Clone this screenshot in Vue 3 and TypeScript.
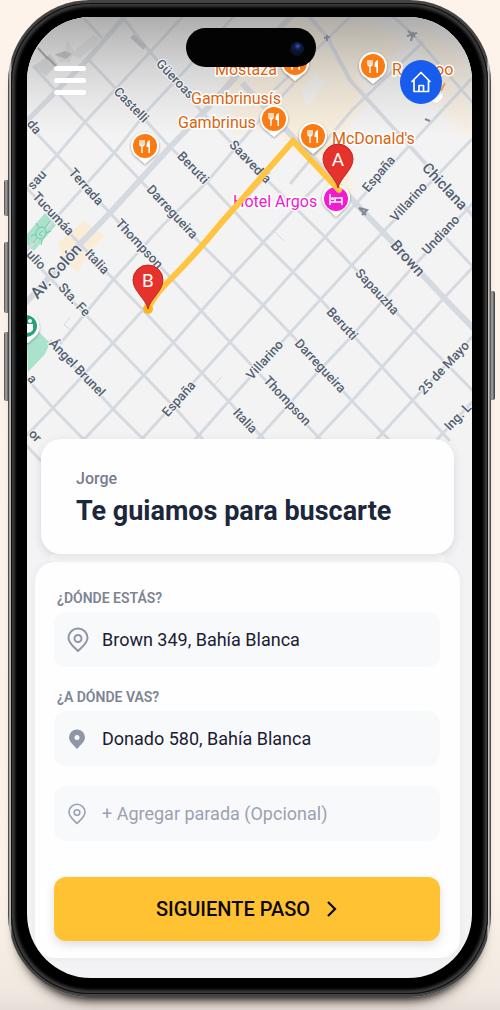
<script setup lang="ts">
import { ref } from 'vue'

interface Street { d: string; w: number }
interface StreetLabel { text: string; x: number; y: number; r: number; s: number }
interface Place { x: number; y: number }
interface PlaceLabel { text: string; x: number; y: number; kind: string }
interface Pin { t: string; x: number; y: number }

const origin = ref('Brown 349, Bahía Blanca')
const destination = ref('Donado 580, Bahía Blanca')
const stop = ref('')

const streets: Street[] = [
  { d: 'M20 309 L82 242 L110 213 L140 180 L170 147 L203 113 L233 80 L292 15', w: 6 },
  { d: 'M20 128 L88 59 L126 15', w: 5 },
  { d: 'M20 196 L57 155 L85 122 L150 52 L184 15', w: 3 },
  { d: 'M20 258 L115 152 L148 110 L190 65 L235 15', w: 3 },
  { d: 'M60 344 L113 280 L163 225 L207 182 L250 131 L294 83', w: 3 },
  { d: 'M26 436 L53 408 L113 343 L143 310 L202 245 L270 172', w: 3 },
  { d: 'M70 454 L113 409 L173 343 L233 275 L293 210 L330 172', w: 3 },
  { d: 'M130 452 L202 373 L250 320 L293 272 L350 210 L472 78', w: 3 },
  { d: 'M186 450 L228 402 L290 333 L352 265 L383 232 L472 139', w: 3 },
  { d: 'M248 450 L317 373 L350 338 L410 270 L474 202', w: 3 },
  { d: 'M306 450 L352 401 L414 331 L444 298 L474 266', w: 3 },
  { d: 'M368 449 L412 401 L474 335', w: 3 },
  { d: 'M430 447 L474 400', w: 3 },
  { d: 'M267 97 L352 15', w: 3 },
  { d: 'M290 184 L352 110 L423 42', w: 3 },
  { d: 'M81 15 L102 38', w: 3 },
  { d: 'M88 59 L148 123 L170 147 L207 182 L263 242 L321 300 L382 367 L450 441', w: 3 },
  { d: 'M33 66 L85 122 L140 180 L202 245 L263 305 L290 333 L352 401 L396 447', w: 3 },
  { d: 'M22 118 L57 155 L110 213 L170 277 L230 342 L332 452', w: 3 },
  { d: 'M20 181 L78 242 L143 310 L202 373 L276 452', w: 3 },
  { d: 'M20 247 L113 343 L177 410 L212 450', w: 3 },
  { d: 'M50 340 L113 409 L154 450', w: 3 },
  { d: 'M20 371 L53 408 L94 450', w: 3 },
  { d: 'M24 443 L44 464', w: 3 },
  { d: 'M121 15 L150 52 L203 113 L268 181 L325 237 L414 331 L474 392', w: 3 },
  { d: 'M203 113 L238 70 M203 113 L238 151', w: 2 },
  { d: 'M242 83 L293 137 L340 187 L383 232 L444 298 L474 329', w: 6 },
  { d: 'M308 15 L327 37 L350 80 L407 143 L474 217', w: 4 },
  { d: 'M391 15 L412 33 L474 104', w: 3 },
  { d: 'M446 238 L474 268', w: 3 },
  { d: 'M275 232 L284 241 M214 386 L221 377 M70 317 L64 325 L70 329', w: 1 }
]

const streetLabels: StreetLabel[] = [
  { text: 'Castelli', x: 131, y: 105, r: 46, s: 13 },
  { text: 'Güeroas', x: 175, y: 79, r: 46, s: 13 },
  { text: 'Berutti', x: 193, y: 168, r: 46, s: 13 },
  { text: 'Saavedra', x: 250, y: 162, r: 46, s: 13 },
  { text: 'Terrada', x: 86, y: 187, r: 48, s: 13 },
  { text: 'Darregueira', x: 172, y: 212, r: 47, s: 13 },
  { text: 'Thompson', x: 139, y: 244, r: 47, s: 13 },
  { text: 'Italia', x: 97, y: 262, r: 47, s: 13 },
  { text: 'Tucumáa', x: 53, y: 214, r: 47, s: 13 },
  { text: 'ulio', x: 36, y: 260, r: 47, s: 13 },
  { text: 'Av. Colón', x: 57, y: 272, r: -48, s: 16 },
  { text: 'Sta. Fe', x: 74, y: 300, r: 47, s: 13 },
  { text: 'Ángel Brunel', x: 77, y: 368, r: 46, s: 13 },
  { text: 'España', x: 179, y: 399, r: -48, s: 13 },
  { text: 'Italia', x: 245, y: 421, r: 47, s: 13 },
  { text: 'Villarino', x: 265, y: 360, r: -48, s: 13 },
  { text: 'Thompson', x: 287, y: 401, r: 47, s: 13 },
  { text: 'Darregueira', x: 320, y: 366, r: 47, s: 13 },
  { text: 'Berutti', x: 342, y: 324, r: 47, s: 13 },
  { text: 'Sapauzha', x: 377, y: 292, r: 47, s: 13 },
  { text: 'Brown', x: 407, y: 259, r: 48, s: 15 },
  { text: 'Undiano', x: 441, y: 235, r: -47, s: 13 },
  { text: 'Villarino', x: 409, y: 202, r: -48, s: 13 },
  { text: 'España', x: 379, y: 174, r: -50, s: 13 },
  { text: 'Chiclana', x: 444, y: 187, r: 47, s: 15 },
  { text: '25 de Mayo', x: 444, y: 368, r: -47, s: 13 },
  { text: 'Ing. L', x: 458, y: 417, r: -46, s: 13 },
  { text: 'da', x: 34, y: 127, r: 50, s: 13 },
  { text: 'sau', x: 37, y: 180, r: -48, s: 13 },
  { text: 'a', x: 32, y: 379, r: 50, s: 13 },
  { text: 'or', x: 35, y: 436, r: 46, s: 13 }
]

const restaurants: Place[] = [
  { x: 295, y: 63 },
  { x: 373, y: 66 },
  { x: 145, y: 146 },
  { x: 274, y: 119 },
  { x: 313, y: 136 }
]

const placeLabels: PlaceLabel[] = [
  { text: 'Mostaza', x: 215, y: 75, kind: 'food' },
  { text: 'Gambrinusís', x: 191, y: 104, kind: 'food' },
  { text: 'Gambrinus', x: 178, y: 128, kind: 'food' },
  { text: "McDonald's", x: 332, y: 144, kind: 'food' },
  { text: 'R', x: 392, y: 75, kind: 'food' },
  { text: 'oo', x: 435, y: 75, kind: 'food' },
  { text: 'Hotel Argos', x: 233, y: 207, kind: 'hotel' }
]

const pins: Pin[] = [
  { t: 'A', x: 338, y: 188 },
  { t: 'B', x: 148, y: 309 }
]
</script>

<template>
  <main class="page">
    <div class="phone">
      <i class="key key-action"></i>
      <i class="key key-up"></i>
      <i class="key key-down"></i>
      <i class="key key-power"></i>
      <div class="bezel">
        <div class="screen">
          <section class="map">
            <svg class="map-art" viewBox="27 17 445 446" preserveAspectRatio="xMidYMin slice" role="img" aria-label="Mapa">
              <defs>
                <linearGradient id="shade" x1="0" y1="0" x2="0" y2="1">
                  <stop offset="0" stop-color="#777" stop-opacity=".56" />
                  <stop offset=".45" stop-color="#888" stop-opacity=".27" />
                  <stop offset="1" stop-color="#aaa" stop-opacity="0" />
                </linearGradient>
                <filter id="soft" x="-20%" y="-20%" width="140%" height="140%"><feGaussianBlur stdDeviation="4" /></filter>
                <filter id="drop" x="-30%" y="-30%" width="160%" height="170%">
                  <feDropShadow dx="0" dy="1" stdDeviation="1" flood-color="#333" flood-opacity=".5" />
                </filter>
              </defs>
              <rect x="0" y="0" width="500" height="480" fill="#f4f3f4" />
              <g fill="#fbecd2" filter="url(#soft)" opacity=".65">
                <path d="M222 72 L290 20 L360 17 L405 40 L375 90 L345 130 L350 180 L352 205 L318 170 L270 125 L235 135Z" />
                <path d="M418 17 L472 60 V140 L420 90Z" opacity=".8" />
              </g>
              <g fill="#f4f3f4" opacity=".8">
                <path d="M301 90 L316 74 L327 83 L307 107Z" />
                <path d="M355 75 L378 52 L396 72 L372 100Z" />
              </g>
              <path d="M58 243 L84 221 L105 236 L89 252 L78 272 L64 261Z" fill="#fbecd6" />
              <path d="M27 234 L45 213 L56 225 L34 251 L27 245Z M27 342 L38 331 L50 343 L45 354 L28 372Z" fill="#a9e3cb" />
              <path v-for="(s, i) in streets" :key="i" :d="s.d" :stroke-width="s.w" class="street" />
              <path d="M36 223 L40 229 M50 221 L44 229 M33 243 L38 237 M51 231 L46 233 M31 236 L36 234 M42 240 L41 245" fill="none" stroke="#74c6a5" stroke-width="1" />
              <path d="M41 227 Q47 227 46 233 Q45 239 40 239 Q35 238 36 232 Q37 228 41 227Z M43 231 L39 234 L42 236" fill="#a9e3cb" stroke="#74c6a5" stroke-width="1" />
              <path d="M34 66 L50 54 L58 64 L46 76Z" fill="#cfd0d2" opacity=".7" />
              <path d="M55 54 L65 50 L67 40 L74 51 L93 35 L99 38 L97 44 L80 58 L72 56 L70 62 L60 62Z" fill="#e6e6e8" />
              <path d="M55 55 L65 51 L72 54 L66 59Z" fill="#bfc0c3" />
              <path d="M47 57 L57 67 M38 48 L48 59" fill="none" stroke="#9b9da2" stroke-width="2" />
              <path d="M132 36 L145 48" fill="none" stroke="#c3c5c9" stroke-width="5" />
              <path d="M324 38 L330 37 M327 35 V41 M407 36 L417 33 M408 31 L415 37 M411 41 L413 32 M425 119 L430 121 M359 208 L366 215 M359 208 L367 210 L362 215" fill="none" stroke="#7e8793" stroke-width="2" />
              <rect x="0" y="17" width="500" height="118" fill="url(#shade)" />
              <text
                v-for="(l, i) in streetLabels"
                :key="'s' + i"
                class="street-label"
                :font-size="l.s"
                :transform="`translate(${l.x} ${l.y}) rotate(${l.r})`"
                text-anchor="middle"
                dy="4"
              >{{ l.text }}</text>
              <text v-for="(l, i) in placeLabels" :key="'p' + i" :class="['place', l.kind]" :x="l.x" :y="l.y">{{ l.text }}</text>
              <g v-for="(p, i) in restaurants" :key="'r' + i" :transform="`translate(${p.x} ${p.y})`">
                <path d="M0 18 L-7 12 A14 14 0 1 1 7 12Z" fill="#fff" filter="url(#drop)" />
                <circle r="12" fill="#fb7a12" />
                <path d="M-5 -6 V-2 Q-5 0 -3 0 Q-1 0 -1 -2 V-6 M-3 -6 V7" fill="none" stroke="#fff" stroke-width="1.4" />
                <path d="M5 7 H3.4 V1 H1.5 Q1 -5 5 -6Z" fill="#fff" />
              </g>
              <path d="M430 101 L437 104 L443 98 V92Z" fill="#fff" stroke="#ddd" stroke-width="1" />
              <path d="M441 91 L445 83" stroke="#ef9c59" stroke-width="2" />
              <path d="M27 313 A14 14 0 0 1 36 336 L28 343 H20 V313Z" fill="#fff" filter="url(#drop)" />
              <circle cx="26" cy="326" r="11" fill="#26a17b" />
              <circle cx="30" cy="321" r="2" fill="#fff" />
              <path d="M26 324 H33 V330 Q30 334 26 332Z" fill="#fff" />
              <path d="M336 217 L329 210 A14 14 0 1 1 343 210Z" fill="#fff" filter="url(#drop)" />
              <circle cx="336" cy="199" r="12" fill="#f21bd2" />
              <path d="M330 194 V205 M330 202 H342 V205 M342 202 V198 H335 V202" fill="none" stroke="#fff" stroke-width="1.5" />
              <circle cx="332.5" cy="198.5" r="1.5" fill="#fff" />
              <path d="M148 309 Q154 296 166 284 Q196 254 222 222 L293 141 L339 190" fill="none" stroke="#ffc440" stroke-width="6" stroke-linejoin="miter" stroke-linecap="round" />
              <circle cx="148" cy="309" r="5" fill="#fdb51c" />
              <g v-for="pin in pins" :key="pin.t" :transform="`translate(${pin.x} ${pin.y})`">
                <path d="M0 0 C-2 -10 -15 -18 -15 -29 A15 15 0 0 1 15 -29 C15 -18 2 -10 0 0Z" fill="#e5322d" stroke="#bd2822" stroke-width="1" />
                <text class="pin-letter" x="0" y="-22" text-anchor="middle">{{ pin.t }}</text>
              </g>
            </svg>
            <header class="topbar">
              <button class="menu" type="button" aria-label="Menú"><i></i><i></i><i></i></button>
              <button class="home" type="button" aria-label="Inicio">
                <svg viewBox="0 0 24 24" width="24" height="24" fill="none" stroke="#fff" stroke-width="1.7" stroke-linejoin="round" stroke-linecap="round">
                  <path d="M3 11.5 L12 2.5 L21 11.500 M5 10 V21.500 H19.500 V10 M10 21 V15.500 H14.500 V21" />
                </svg>
              </button>
            </header>
            <div class="island"><i class="lens"></i></div>
          </section>

          <section class="greeting">
            <p>Jorge</p>
            <h1>Te guiamos para buscarte</h1>
          </section>
          <div class="joint"></div>

          <form class="trip" @submit.prevent>
            <label class="caption" for="origin">¿DÓNDE ESTÁS?</label>
            <div class="field">
              <span class="icon">
                <svg viewBox="0 0 24 26" width="24" height="26" fill="none" stroke="#8f96a5" stroke-width="2">
                  <path d="M12 24 C7 19 2.500 16 2.500 11 A9.500 9.500 0 0 1 21.500 11 C21.500 16 17 19 12 24Z" stroke-linejoin="round" />
                  <circle cx="12" cy="11.500" r="3.500" />
                </svg>
              </span>
              <input id="origin" v-model="origin" type="text" />
            </div>
            <label class="caption" for="destination">¿A DÓNDE VAS?</label>
            <div class="field">
              <span class="icon">
                <svg viewBox="0 0 20 22" width="20" height="22">
                  <path d="M10 21 C6 16.500 2 13.500 2 9.500 A8 8 0 0 1 18 9.500 C18 13.500 14 16.500 10 21Z" fill="#8f96a5" />
                  <circle cx="10" cy="9.500" r="2.500" fill="#f8f9fb" />
                </svg>
              </span>
              <input id="destination" v-model="destination" type="text" />
            </div>
            <div class="field">
              <span class="icon">
                <svg viewBox="0 0 20 22" width="20" height="22" fill="none" stroke="#9aa0b0" stroke-width="1.6">
                  <path d="M10 20.500 C6 16.500 2 13.500 2 9.300 A8 8 0 0 1 18 9.300 C18 13.500 14 16.500 10 20.500Z" stroke-linejoin="round" />
                  <circle cx="10" cy="9.500" r="2.800" />
                </svg>
              </span>
              <input id="stop" v-model="stop" type="text" aria-label="Parada opcional" placeholder="+ Agregar parada (Opcional)" />
            </div>
            <button class="next" type="submit">
              SIGUIENTE PASO
              <svg viewBox="0 0 12 18" width="12" height="18" fill="none" stroke="#0c0903" stroke-width="2.2"><path d="M2 2 L9 9 L2 16" /></svg>
            </button>
          </form>
        </div>
      </div>
    </div>
  </main>
</template>

<style>
body {
  margin: 0;
  background: #fdf3ea;
}
</style>

<style scoped>
* {
  box-sizing: border-box;
}
.page {
  min-height: 100vh;
  padding: 0 9px 12px 8px;
  overflow: hidden;
  font-family: Roboto, "Liberation Sans", sans-serif;
  background: linear-gradient(#fdf3ea 0, #fcf2e9 88%, #f1e9e1 98%, #e6dfd8 100%);
}
.phone {
  position: relative;
  padding: 3px;
  border-radius: 82px;
  background: linear-gradient(90deg, #222 0, #777 1px, #d5d5d5 2px, #444 4px, #444 calc(100% - 4px), #d5d5d5 calc(100% - 3px), #777 calc(100% - 1px), #222 100%);
  box-shadow: 0 10px 8px -9px #111, 0 14px 14px -10px rgba(60, 45, 35, .6);
}
.key {
  position: absolute;
  left: -4px;
  width: 5px;
  border-radius: 2px 0 0 2px;
  background: linear-gradient(90deg, #444, #aaa 40%, #333);
}
.key-action {
  top: 180px;
  height: 36px;
}
.key-up {
  top: 242px;
  height: 71px;
}
.key-down {
  top: 332px;
  height: 69px;
}
.key-power {
  right: -4px;
  left: auto;
  top: 291px;
  height: 109px;
  border-radius: 0 2px 2px 0;
}
.bezel {
  padding: 14px 16px 16px;
  border-radius: 79px;
  background: #000;
  box-shadow: inset 0 0 0 1px #111, inset 0 0 3px 4px #3c3c3c;
}
.screen {
  display: flex;
  flex-direction: column;
  overflow: hidden;
  padding-bottom: 20px;
  border-radius: 64px;
  background: #f3f3f5;
}
.map {
  position: relative;
  height: 446px;
}
.map-art {
  display: block;
  width: 100%;
  height: 100%;
}
.street {
  fill: none;
  stroke: #d5dae1;
}
.street-label {
  font-weight: 500;
  fill: #535f70;
  stroke: #f5f5f6;
  stroke-width: 2px;
  paint-order: stroke;
}
.place {
  font-size: 16px;
  stroke: #fff;
  stroke-width: 3px;
  paint-order: stroke;
}
.food {
  fill: #d8640f;
}
.hotel {
  fill: #ee19cf;
}
.pin-letter {
  font-size: 19px;
  fill: #fff;
}
.topbar {
  position: absolute;
  inset: 43px 30px auto 27px;
  display: flex;
  align-items: flex-start;
  justify-content: space-between;
}
.menu {
  display: flex;
  flex-direction: column;
  gap: 7px;
  padding: 6px 0 0;
  border: 0;
  background: none;
}
.menu i {
  width: 32px;
  height: 5px;
  border-radius: 3px;
  background: #fff;
}
.home {
  display: grid;
  place-items: center;
  width: 42px;
  height: 44px;
  padding: 0;
  border: 0;
  border-radius: 50%;
  background: #175cec;
}
.island {
  position: absolute;
  top: 11px;
  left: 50%;
  width: 130px;
  height: 39px;
  margin-left: -64px;
  border-radius: 20px;
  background: #030303;
}
.lens {
  position: absolute;
  top: 14px;
  right: 12px;
  width: 14px;
  height: 14px;
  border-radius: 50%;
  background: radial-gradient(circle at 55% 30%, #2f62b5 0, #111e49 25%, #0a1028 60%, #0c0e14 100%);
}
.greeting {
  position: relative;
  z-index: 1;
  margin: -24px 18px 0 14px;
  padding: 29px 35px 25px;
  border-radius: 20px;
  background: #fefefe;
  box-shadow: 0 3px 10px rgba(40, 45, 60, .13);
}
.greeting p {
  margin: 0;
  font-size: 16px;
  line-height: 22px;
  font-weight: 500;
  color: #767d8c;
}
.greeting h1 {
  margin: 4px 0 0;
  font-size: 27px;
  line-height: 35px;
  font-weight: 700;
  color: #1c273b;
  white-space: nowrap;
}
.joint {
  height: 8px;
  margin: 0 27px 0 23px;
  border-radius: 6px;
  background: #fafafb;
}
.trip {
  display: flex;
  flex-direction: column;
  margin: 0 12px 0 8px;
  padding: 25px 20px 17px 19px;
  border-radius: 20px;
  background: #fefefe;
  box-shadow: 0 0 6px rgba(40, 45, 60, .06);
}
.caption {
  padding-left: 3px;
  margin-bottom: 3px;
  font-size: 14px;
  line-height: 22px;
  font-weight: 600;
  color: #7d8493;
}
.field {
  display: flex;
  align-items: center;
  height: 55px;
  margin-bottom: 20px;
  padding: 0 12px;
  border-radius: 12px;
  background: #f8f9fb;
}
.field + .caption {
  margin-top: -1px;
}
.icon {
  display: flex;
  flex: 0 0 36px;
}
.icon svg[width="20"] {
  margin-left: 1px;
}
.field input {
  flex: 1;
  min-width: 0;
  padding: 0;
  border: 0;
  outline: 0;
  background: none;
  font: 400 18px/24px Roboto, "Liberation Sans", sans-serif;
  color: #1a2032;
}
.field input::placeholder {
  color: #9ba1b0;
  opacity: 1;
}
.next {
  display: flex;
  align-items: center;
  justify-content: center;
  gap: 16px;
  height: 64px;
  margin-top: 16px;
  border: 0;
  border-radius: 12px;
  background: #ffc232;
  box-shadow: 0 4px 8px rgba(60, 60, 70, .16);
  font: 500 20px/24px Roboto, "Liberation Sans", sans-serif;
  color: #0c0903;
}
</style>
